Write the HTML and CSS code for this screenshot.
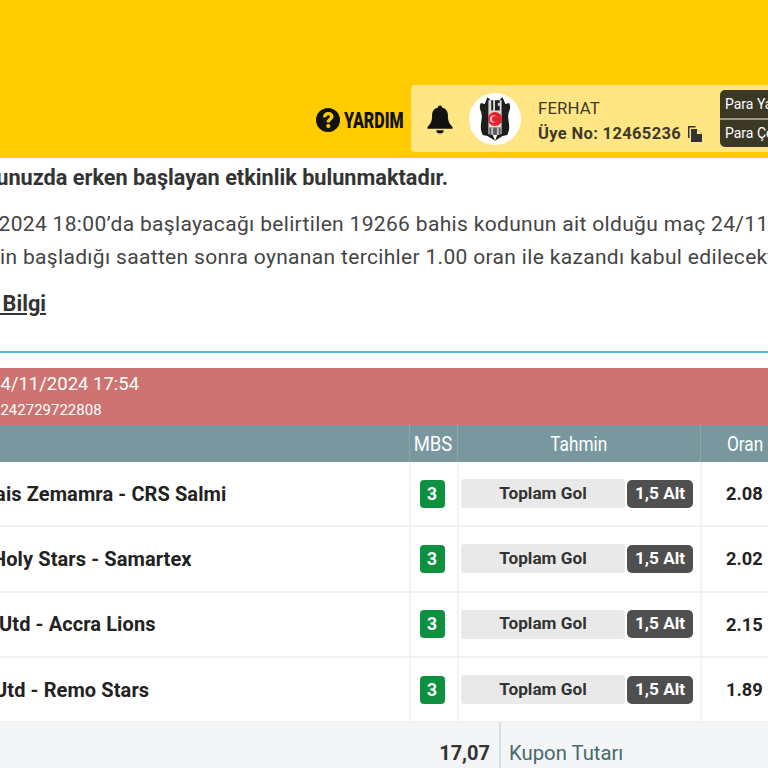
FILE: index.html
```html
<!DOCTYPE html>
<html lang="tr">
<head>
<meta charset="utf-8">
<title>Kupon</title>
<link rel="stylesheet" href="styles.css">
</head>
<body>
<div class="page">
  <header class="topbar">
    <a class="help">
      <svg class="help-icon" viewBox="0 0 24 24"><circle cx="12" cy="12" r="12" fill="#111"/><path d="M7 9.200C7 6 9.300 4 12.300 4c3 0 5.200 1.800 5.200 4.500 0 3.400-3.500 3.500-3.500 6h-3.400c0-4 3.300-4 3.300-5.800 0-.9-.7-1.500-1.700-1.500-1.100 0-1.800.8-1.900 2z" fill="#ffcc00"/><circle cx="12.300" cy="18" r="2.100" fill="#ffcc00"/></svg>
      <span class="help-text">YARDIM</span>
    </a>
    <div class="user-panel">
      <svg class="bell" viewBox="0 0 28 30"><path d="M14 0c1.300 0 2.200.9 2.200 2.200 4 .9 6.300 4.100 6.300 8.300 0 6.500 1.600 9.300 5 12.500v2H.5v-2c3.400-3.200 5-6 5-12.500 0-4.200 2.300-7.400 6.300-8.300C11.800.9 12.700 0 14 0z" fill="#111"/><path d="M10 26.500h8a4 3.500 0 0 1-8 0z" fill="#111"/></svg>
      <div class="avatar">
        <svg viewBox="0 0 34 46" class="crest">
          <path d="M9 0c3 2 4 4 4 8v28l4 10-8-5-5-1C0 32 3 26 3 20 3 14-1 12 2 6l4 1z" fill="#1d1d1d"/>
          <path d="M25 0c-3 2-4 4-4 8v28l-4 10 8-5 5-1c4-8 1-14 1-20 0-6 4-8 1-14l-4 1z" fill="#1d1d1d"/>
          <rect x="10" y="3" width="14" height="36" fill="#dcd8d4"/>
          <path d="M13 3h2v11h-2zM17 3h5v3h-2v8h-3zM20 9h2v5h-2z" fill="#222"/>
          <circle cx="17" cy="23" r="7.500" fill="#e2232f"/>
          <circle cx="15.500" cy="23" r="4" fill="#f7b9bd"/>
          <circle cx="17" cy="23" r="3.200" fill="#e2232f"/>
          <path d="M11 32h12v8H11z" fill="#5c5c5c"/>
          <path d="M13 32h2v8h-2zM19 32h2v8h-2z" fill="#bdbdbd"/>
        </svg>
      </div>
      <div class="user-info">
        <div class="user-name">FERHAT</div>
        <div class="user-no">Üye No: 12465236
          <svg class="copy" viewBox="0 0 14 16"><path d="M0 0h7.500v1.500H1.500V12H0z" fill="#333"/><path d="M3 3h6l5 5v8H3z" fill="#333"/><path d="M9 3v5h5z" fill="#ffe584"/></svg>
        </div>
      </div>
      <div class="wallet">
        <a class="wallet-btn">Para Yatır</a>
        <a class="wallet-btn">Para Çek</a>
      </div>
    </div>
  </header>

  <section class="notice">
    <h2 class="notice-title">Kuponunuzda erken başlayan etkinlik bulunmaktadır.</h2>
    <p class="notice-line first">24/11/2024 18:00’da başlayacağı belirtilen 19266 bahis kodunun ait olduğu maç 24/11/2024</p>
    <p class="notice-line second">etkinliğin başladığı saatten sonra oynanan tercihler 1.00 oran ile kazandı kabul edilecektir.</p>
    <a class="more">Detaylı Bilgi</a>
  </section>

  <section class="coupon">
    <div class="coupon-head">
      <div class="coupon-date">24/11/2024 17:54</div>
      <div class="coupon-id">1242729722808</div>
    </div>
    <div class="grid head-row">
      <div class="cell match"></div>
      <div class="cell mbs"><span class="narrow">MBS</span></div>
      <div class="cell pick"><span class="narrow">Tahmin</span></div>
      <div class="cell odd"><span class="narrow">Oran</span></div>
    </div>
    <div class="grid row">
      <div class="cell match"><span class="team t1">Renais Zemamra - CRS Salmi</span></div>
      <div class="cell mbs"><span class="badge">3</span></div>
      <div class="cell pick"><span class="market">Toplam Gol</span><span class="choice">1,5 Alt</span></div>
      <div class="cell odd">2.08</div>
    </div>
    <div class="grid row">
      <div class="cell match"><span class="team t2">Holy Stars - Samartex</span></div>
      <div class="cell mbs"><span class="badge">3</span></div>
      <div class="cell pick"><span class="market">Toplam Gol</span><span class="choice">1,5 Alt</span></div>
      <div class="cell odd">2.02</div>
    </div>
    <div class="grid row">
      <div class="cell match"><span class="team t3">Utd - Accra Lions</span></div>
      <div class="cell mbs"><span class="badge">3</span></div>
      <div class="cell pick"><span class="market">Toplam Gol</span><span class="choice">1,5 Alt</span></div>
      <div class="cell odd">2.15</div>
    </div>
    <div class="grid row">
      <div class="cell match"><span class="team t4">Utd - Remo Stars</span></div>
      <div class="cell mbs"><span class="badge">3</span></div>
      <div class="cell pick"><span class="market">Toplam Gol</span><span class="choice">1,5 Alt</span></div>
      <div class="cell odd">1.89</div>
    </div>
    <div class="summary">
      <div class="sum-value">17,07</div>
      <div class="sum-label">Kupon Tutarı</div>
    </div>
  </section>
</div>
</body>
</html>
```
FILE: styles.css
```css
* { box-sizing: border-box; }
html, body { margin: 0; height: 100%; overflow: hidden; background: #fff; }
body { font-family: Roboto, "Liberation Sans", sans-serif; color: #333; }
.page { width: 768px; height: 768px; overflow: hidden; }

.topbar { height: 158px; background: #ffcc00; display: flex; align-items: flex-end; justify-content: flex-end; padding-bottom: 6px; overflow: hidden; }
.help { display: flex; align-items: center; width: 88px; margin-right: 7px; height: 64px; flex: none; }
.help-icon { width: 24px; height: 24px; flex: none; }
.help-text { display: block; font-weight: 900; font-size: 22px; color: #111; transform: scaleX(.73); transform-origin: left center; margin-left: 4px; }
.user-panel { width: 357px; flex: none; height: 67px; background: #ffe584; border-radius: 4px 0 0 4px; display: flex; align-items: center; padding-left: 16px; }
.bell { width: 26px; height: 29px; flex: none; margin-top: 2px; }
.avatar { width: 52px; height: 52px; border-radius: 50%; background: #fff; margin-left: 16px; display: flex; align-items: center; justify-content: center; flex: none; }
.crest { width: 32px; height: 44px; }
.user-info { margin-left: 17px; width: 182px; flex: none; color: #3d3a2a; padding-top: 4px; }
.user-name { font-size: 16.800px; line-height: 24px; letter-spacing: .1px; }
.user-no { font-size: 16.500px; font-weight: 700; line-height: 24px; letter-spacing: .35px; margin-top: 2px; display: flex; align-items: center; gap: 7px; }
.copy { width: 14px; height: 16px; }
.wallet { width: 100px; flex: none; height: 57px; background: #3b3826; border-radius: 5px 0 0 5px; display: flex; flex-direction: column; }
.wallet-btn { flex: 1; color: #fff; font-size: 14px; padding-left: 5px; line-height: 28px; white-space: nowrap; overflow: hidden; }
.wallet-btn + .wallet-btn { border-top: 2px solid #9a9788; line-height: 27px; }

.notice { height: 195px; margin-left: -56px; white-space: nowrap; border-bottom: 2px solid #5eb5d2; padding-top: 7px; }
.notice-title { margin: 0 0 0 -10px; font-size: 21.700px; line-height: 26px; font-weight: 700; color: #333; }
.notice-line { margin: 0; font-size: 21px; line-height: 26px; color: #444; letter-spacing: .33px; }
.notice-line.first { margin-top: 20px; margin-left: -12px; }
.notice-line.second { margin-top: 7px; margin-left: -14px; }
.more { display: block; margin-top: 20px; margin-left: -14px; font-size: 21.700px; font-weight: 700; line-height: 28px; text-decoration: underline; color: #333; }

.coupon { margin-top: 15px; }
.coupon-head { height: 57px; background: #cd7371; color: #fff; white-space: nowrap; overflow: hidden; padding-top: 4px; }
.coupon-date { font-size: 18.500px; line-height: 24px; margin-left: -10px; }
.coupon-id { font-size: 15px; line-height: 20px; margin-top: 4px; margin-left: -8px; }

.grid { display: grid; grid-template-columns: 409px 48px 243px 68px; }
.head-row { height: 37px; background: #78979f; color: #fff; }
.head-row .cell { display: flex; align-items: center; justify-content: center; border-left: 1px solid #8ba6ad; gap: 0; padding-left: 0; }
.head-row .cell.match { border-left: 0; }
.head-row .cell.mbs { padding-right: 2px; }
.head-row .cell.odd { justify-content: flex-start; padding-left: 26px; }
.narrow { display: inline-block; font-size: 21px; white-space: nowrap; transform: scaleX(.82); }
.head-row .mbs .narrow { transform: scaleX(.88); }
.head-row .odd .narrow { transform-origin: left center; }
.row { height: 65.300px; border-bottom: 2px solid #f1f1f1; }
.row .cell { display: flex; align-items: center; border-left: 2px solid #f3f3f3; }
.row .cell.match { border-left: 0; overflow: hidden; white-space: nowrap; }
.team { font-size: 20px; font-weight: 700; color: #222; letter-spacing: .1px; }
.t1 { margin-left: -40px; }
.t2 { margin-left: -8px; }
.t3 { margin-left: -1px; }
.t4 { margin-left: -6px; }
.mbs { justify-content: center; }
.row .mbs { padding-right: 4px; }
.badge { width: 25px; height: 28px; background: #0d9140; color: #fff; border-radius: 4px; font-size: 17.500px; font-weight: 700; display: flex; align-items: center; justify-content: center; }
.pick { padding-left: 2px; gap: 2px; }
.market { width: 164px; height: 29px; background: #e9e9e9; border-radius: 3px; color: #333; font-size: 17.200px; font-weight: 700; display: flex; align-items: center; justify-content: center; padding-bottom: 2px; }
.choice { width: 66px; height: 28px; background: #4f4f4f; border-radius: 5px; color: #fff; font-size: 17.200px; font-weight: 700; display: flex; align-items: center; justify-content: center; padding-bottom: 2px; }
.row .odd { font-size: 18.300px; font-weight: 700; color: #222; padding-left: 24px; }
.summary { height: 45px; background: #f3f5f6; display: flex; }
.sum-value { width: 501px; border-right: 2px solid #d5dee2; padding-right: 9px; text-align: right; font-size: 20px; font-weight: 700; line-height: 60px; color: #333; }
.sum-label { padding-left: 8px; font-size: 20.300px; line-height: 60px; color: #47686f; white-space: nowrap; }
```
